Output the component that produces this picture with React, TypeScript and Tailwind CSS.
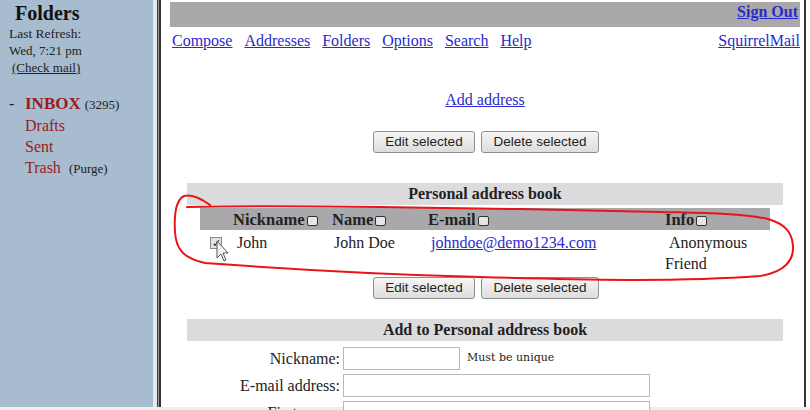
import React from "react";

const serif = { fontFamily: '"Liberation Serif", "Times New Roman", serif' };
const sans = { fontFamily: '"Liberation Sans", Arial, sans-serif' };

function Btn({ label, w }: { label: string; w: string }) {
  return (
    <button
      style={sans}
      className={`${w} h-[22px] rounded-[3px] border border-[#8e8e8e] bg-gradient-to-b from-[#f6f6f6] to-[#dddddd] text-[13.5px] text-[#222] leading-none`}
    >
      {label}
    </button>
  );
}

function HeadBox() {
  return <span className="ml-[2px] inline-block h-[10px] w-[11px] rounded-[2px] border border-[#333] bg-[#e6e6e6] align-[-1px]" />;
}

function Lnk({ children, bold }: { children: React.ReactNode; bold?: boolean }) {
  return <a className={`text-[#2a2acd] underline ${bold ? "font-bold" : ""}`}>{children}</a>;
}

export default function App() {
  return (
    <div style={serif} className="relative h-[410px] w-[810px] overflow-hidden bg-white text-[#222]">
      <div className="flex h-[407px]">
        {/* folder list */}
        <div className="w-[153px] shrink-0 bg-[#a7bccf] pl-[9px] pt-[1px]">
          <div className="pl-[6px] text-[20px] font-bold leading-[24px] text-[#111]">Folders</div>
          <div className="text-[13.5px] leading-[17px]">Last Refresh:</div>
          <div className="text-[13px] leading-[17px]">Wed, 7:21 pm</div>
          <div className="pl-[3px] text-[13px] leading-[17px]">
            <span className="underline">(Check mail)</span>
          </div>
          <div className="mt-[17px] text-[16px] leading-[21px]">
            <div>
              <span className="inline-block w-[16px]">-</span>
              <span className="text-[17px] font-bold text-[#9b1b1b]">INBOX</span>{" "}
              <span className="text-[13px]">(3295)</span>
            </div>
            <div className="pl-[16px] text-[#9b1b1b]">Drafts</div>
            <div className="pl-[16px] text-[#9b1b1b]">Sent</div>
            <div className="pl-[16px]">
              <span className="text-[#9b1b1b]">Trash</span>
              <span className="ml-[8px] text-[13px]">(Purge)</span>
            </div>
          </div>
        </div>
        <div className="w-[4px] shrink-0 bg-[#e4e9f3]" />
        <div className="w-[1px] shrink-0 bg-[#444]" />
        <div className="w-[1px] shrink-0 bg-[#999]" />
        <div className="w-[2px] shrink-0 bg-[#333]" />

        {/* main frame */}
        <div className="w-[643px] shrink-0 pl-[9px] pr-[4px] pt-[2px]">
          <div className="flex h-[25px] items-end justify-end bg-[#aaa8ab] pb-[3px] pr-[2px] text-[16px]">
            <Lnk bold>Sign Out</Lnk>
          </div>
          <div className="mt-[3px] flex h-[22px] items-center pl-[2px] text-[16px]">
            <div className="flex gap-[12px]">
              <Lnk>Compose</Lnk>
              <Lnk>Addresses</Lnk>
              <Lnk>Folders</Lnk>
              <Lnk>Options</Lnk>
              <Lnk>Search</Lnk>
              <Lnk>Help</Lnk>
            </div>
            <div className="ml-auto">
              <Lnk>SquirrelMail</Lnk>
            </div>
          </div>

          <div className="mt-[38px] text-center text-[16px] leading-[20px]">
            <Lnk>Add address</Lnk>
          </div>
          <div className="mt-[21px] flex justify-center gap-[6px] pl-[2px]">
            <Btn label="Edit selected" w="w-[102px]" />
            <Btn label="Delete selected" w="w-[118px]" />
          </div>

          {/* address book */}
          <div className="mx-auto mt-[30px] w-[596px]">
            <div className="flex h-[22px] items-center justify-center bg-[#dcdbdd] text-[16px] font-bold">
              Personal address book
            </div>
            <div className="mx-auto mt-[3px] w-[570px]">
              <div className="grid h-[22px] grid-cols-[33px_99px_96px_237px_105px] items-center bg-[#a9a8aa] text-[16.5px] font-bold">
                <div />
                <div>
                  Nickname
                  <HeadBox />
                </div>
                <div>
                  Name
                  <HeadBox />
                </div>
                <div>
                  E-mail
                  <HeadBox />
                </div>
                <div>
                  Info
                  <HeadBox />
                </div>
              </div>
              <div className="grid h-[42px] grid-cols-[33px_99px_96px_237px_105px] pt-[2px] text-[16px] leading-[21px]">
                <div className="pl-[10px] pt-[5px]">
                  <div className="flex h-[12px] w-[12px] items-center justify-center border border-[#8a8a8a] bg-[#e2e2e6] text-[11px] leading-none text-[#222]">
                    ✓
                  </div>
                </div>
                <div className="pl-[4px]">John</div>
                <div className="pl-[2px]">John Doe</div>
                <div className="pl-[3px]">
                  <Lnk>johndoe@demo1234.com</Lnk>
                </div>
                <div className="pr-[4px]">&nbsp;Anonymous Friend</div>
              </div>
            </div>
            <div className="mt-[5px] flex justify-center gap-[6px] pl-[2px]">
              <Btn label="Edit selected" w="w-[102px]" />
              <Btn label="Delete selected" w="w-[118px]" />
            </div>

            <div className="mt-[20px] flex h-[22px] items-center justify-center bg-[#dcdbdd] text-[16px] font-bold">
              Add to Personal address book
            </div>
            <div className="mt-[6px] grid grid-cols-[153px_1fr] gap-x-[3px] gap-y-[4px] text-[16px]">
              <div className="flex h-[23px] items-center justify-end">Nickname:</div>
              <div className="flex items-center gap-[7px]">
                <div className="h-[23px] w-[117px] border border-[#b8b8b8] bg-white" />
                <span className="text-[11px]" style={{ fontFamily: '"DejaVu Serif", serif' }}>
                  Must be unique
                </span>
              </div>
              <div className="flex h-[23px] items-center justify-end">E-mail address:</div>
              <div className="h-[23px] w-[307px] border border-[#b8b8b8] bg-white" />
              <div className="flex h-[23px] items-center justify-end">First name:</div>
              <div className="h-[23px] w-[307px] border border-[#b8b8b8] bg-white" />
            </div>
          </div>
        </div>
        <div className="w-[2px] shrink-0 bg-[#333]" />
      </div>
      <div className="h-[3px] bg-[#eeeeee]" />

      {/* hand-drawn annotation and mouse pointer */}
      <svg className="pointer-events-none absolute left-0 top-0" width="810" height="410" viewBox="0 0 810 410">
        <path
          d="M 210 205 C 200 198, 192 194, 184 196 C 176 200, 174 215, 175 232 C 176 248, 182 258, 205 263 C 300 270, 400 275, 480 277 C 580 280, 680 282, 760 276 C 785 272, 794 260, 793 246 C 792 232, 785 224, 768 219 C 740 213, 700 213, 660 212 C 560 210, 480 208, 380 207 C 300 206, 240 206, 187 207"
          fill="none"
          stroke="#e8141a"
          strokeWidth="2"
          strokeLinecap="round"
        />
        <path
          d="M 217 241 L 217 258 L 221 254 L 224 261 L 226 260 L 223 253 L 228 253 Z"
          fill="#f4f4f4"
          stroke="#555"
          strokeWidth="1"
          strokeLinejoin="round"
        />
      </svg>
    </div>
  );
}
